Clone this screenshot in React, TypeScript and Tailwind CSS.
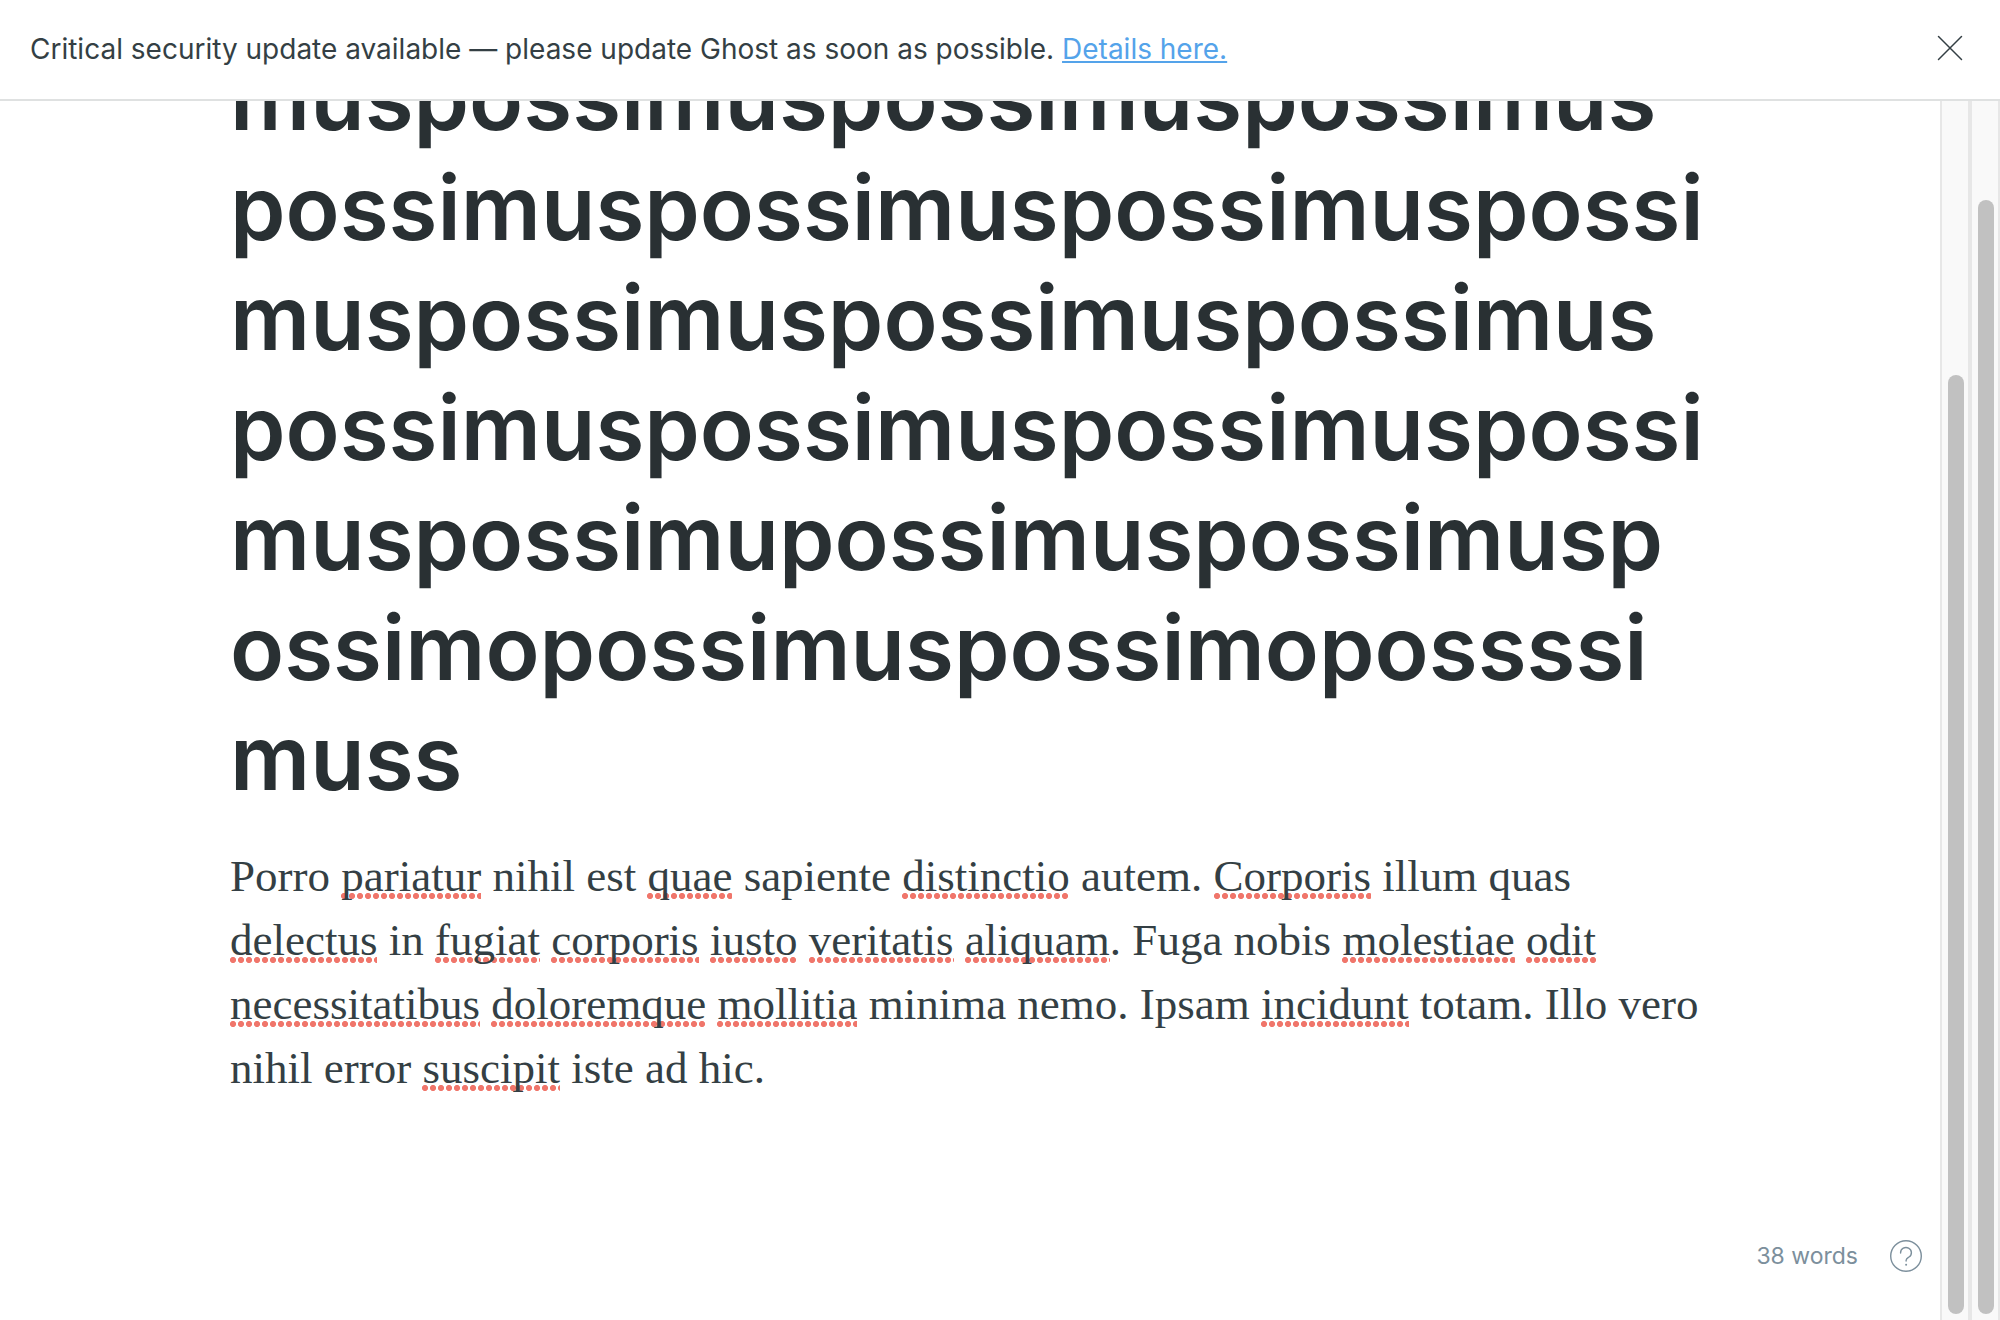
import React from 'react';

const titleLines = [
  'muspossimuspossimuspossimus',
  'possimuspossimuspossimuspossi',
  'muspossimuspossimuspossimus',
  'possimuspossimuspossimuspossi',
  'muspossimupossimuspossimusp',
  'ossimopossimuspossimopossssi',
  'muss',
];

// Words wrapped in asterisks are flagged by the spelling checker.
const bodyLines = [
  'Porro *pariatur* nihil est *quae* sapiente *distinctio* autem. *Corporis* illum quas',
  '*delectus* in *fugiat* *corporis* *iusto* *veritatis* *aliquam*. Fuga nobis *molestiae* *odit*',
  '*necessitatibus* *doloremque* *mollitia* minima nemo. Ipsam *incidunt* totam. Illo vero',
  'nihil error *suscipit* iste ad hic.',
];

function Misspelled({ children }: { children: React.ReactNode }) {
  return (
    <span className="bg-[radial-gradient(circle_at_3px_3px,#f0766b_2.7px,transparent_3.4px)] bg-[length:8px_6px] bg-[position:left_bottom_2px] bg-repeat-x">
      {children}
    </span>
  );
}

function BodyLine({ text }: { text: string }) {
  return (
    <span className="block whitespace-nowrap">
      {text.split('*').map((part, i) => (i % 2 ? <Misspelled key={i}>{part}</Misspelled> : part))}
    </span>
  );
}

function Banner() {
  return (
    <header className="flex shrink-0 items-center justify-between border-b-2 border-[#dfe1e1] bg-white py-7 pr-9 pl-[30px]">
      <p className="text-[28px] leading-[43px] text-[#343f44]">
        Critical security update available — please update Ghost as soon as possible.{' '}
        <a href="#details" className="text-[#54a3ea] underline decoration-2 underline-offset-2">
          Details here.
        </a>
      </p>
      <button type="button" aria-label="Close notification" className="pb-1 text-[#343f44]">
        <svg viewBox="0 0 28 28" className="size-7" fill="none" stroke="currentColor" strokeWidth="1.5" strokeLinecap="round">
          <path d="M2.5 2.5 25.5 25.5M25.5 2.5 2.5 25.5" />
        </svg>
      </button>
    </header>
  );
}

function EditorStatus() {
  return (
    <div className="absolute right-[18px] bottom-12 flex items-center gap-8 text-[#7c8f9c]">
      <span className="text-[23px] leading-8">38 words</span>
      <button type="button" aria-label="Help">
        <svg viewBox="0 0 32 32" className="size-8" fill="none" stroke="currentColor" strokeWidth="1.4" strokeLinecap="round">
          <circle cx="16" cy="16" r="15.3" />
          <path d="M10.6 13V12.6a5.4 5.2 0 1 1 8.4 4.4c-1.6 1.1-2.9 1.7-2.9 3.5v.6" />
          <circle cx="16.1" cy="24.8" r="1" fill="currentColor" stroke="none" />
        </svg>
      </button>
    </div>
  );
}

export default function App() {
  return (
    <div className="flex h-screen flex-col overflow-hidden bg-white font-['Inter',sans-serif]">
      <Banner />
      <div className="flex min-h-0 flex-1">
        <main className="relative min-w-0 flex-1 overflow-hidden">
          <article className="-mt-[58px] px-[230px]">
            <h1 className="text-[89px] leading-[110px] font-semibold text-[#293033]">
              {titleLines.map((line, i) => (
                <span key={i} className="block whitespace-nowrap">
                  {line}
                </span>
              ))}
            </h1>
            <p className="mt-[31px] font-['Liberation_Serif',serif] text-[45px] leading-[64px] text-[#343f44]">
              {bodyLines.map((line) => (
                <BodyLine key={line} text={line} />
              ))}
            </p>
          </article>
          <EditorStatus />
        </main>
        <div className="flex w-[30px] shrink-0 border-x-2 border-[#e7e7e7] bg-[#f9f9f9] pt-[274px] pr-1 pb-1.5 pl-1.5">
          <div className="flex-1 rounded-full bg-[#c1c1c1]" />
        </div>
        <div className="flex w-[30px] shrink-0 border-x-2 border-[#e7e7e7] bg-[#f9f9f9] pt-[99px] pr-1 pb-1.5 pl-1.5">
          <div className="flex-1 rounded-full bg-[#c1c1c1]" />
        </div>
      </div>
    </div>
  );
}
